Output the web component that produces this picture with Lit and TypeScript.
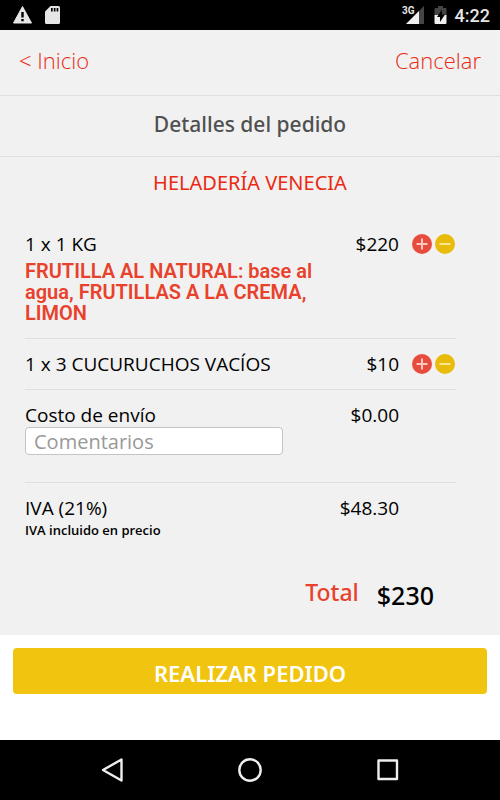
import { LitElement, html, css, nothing } from "lit";
import { customElement, property } from "lit/decorators.js";

interface OrderItem {
  name: string;
  detail?: string;
  price: string;
}

const ITEMS: OrderItem[] = [
  {
    name: "1 x 1 KG",
    detail: "FRUTILLA AL NATURAL: base al agua, FRUTILLAS A LA CREMA, LIMON",
    price: "$220",
  },
  { name: "1 x 3 CUCURUCHOS VACÍOS", price: "$10" },
];

@customElement("status-bar")
export class StatusBar extends LitElement {
  static styles = css`
    :host {
      display: flex;
      align-items: center;
      height: 30px;
      padding: 0 10px 0 12px;
      background: #000;
      color: #e6e6e6;
      font-family: Roboto, sans-serif;
    }
    svg {
      display: block;
    }
    .left {
      display: flex;
      gap: 12px;
      flex: 1;
    }
    .right {
      display: flex;
      align-items: center;
      gap: 8px;
    }
    .signal {
      display: flex;
      padding-right: 2px;
    }
    .network {
      font-size: 10px;
      line-height: 12px;
      font-weight: 700;
      margin-right: -10px;
    }
    .time {
      font-size: 18px;
      line-height: 24px;
      padding-top: 2px;
      font-weight: 500;
    }
  `;

  render() {
    return html`
      <div class="left">
        <svg width="21" height="20" viewBox="0 0 21 20" aria-hidden="true">
          <path d="M10.5 1.5 19.5 18H1.5Z" fill="#e6e6e6" stroke="#e6e6e6" stroke-linejoin="round" />
          <path d="M9.300 7h2.400v5.600H9.300zM9.300 14h2.400v2.200H9.300z" fill="#000" />
        </svg>
        <svg width="16" height="20" viewBox="0 0 16 20" aria-hidden="true">
          <path d="M5.500 1H13.500a1.500 1.500 0 0 1 1.500 1.500v15a1.500 1.500 0 0 1-1.500 1.500H1.500a1.500 1.500 0 0 1-1.500-1.500V6.500Z" fill="#e6e6e6" />
          <path d="M6 3h1.700v3.500H6zM8.800 3h1.700v3.500H8.800zM11.600 3h1.700v3.500h-1.700z" fill="#000" />
        </svg>
      </div>
      <div class="right">
        <div class="signal">
          <span class="network">3G</span>
          <svg width="19" height="20" viewBox="0 0 19 20" aria-hidden="true">
            <path d="M19 1v18H1Z" fill="#444" />
            <path d="M14 6v13H1Z" fill="#f0f0f0" />
          </svg>
        </div>
        <svg width="13" height="20" viewBox="0 0 13 20" aria-hidden="true">
          <path d="M4 1h5v2h2.500a1 1 0 0 1 1 1v6H.5V4a1 1 0 0 1 1-1H4Z" fill="#444" />
          <path d="M.5 10h12v8a1 1 0 0 1-1 1h-10a1 1 0 0 1-1-1Z" fill="#f0f0f0" />
          <path d="M8 4.500 3 12h3v5l5-7.500H8Z" fill="#000" />
        </svg>
        <span class="time">4:22</span>
      </div>
    `;
  }
}

@customElement("order-row")
export class OrderRow extends LitElement {
  @property() name = "";
  @property() detail = "";
  @property() price = "";
  @property({ type: Boolean }) editable = false;

  static styles = css`
    :host {
      display: grid;
      grid-template-columns: minmax(0, 1fr) auto 57px;
      padding: 14px 0;
      border-bottom: 1px solid #dfdfdf;
      font-size: 19px;
      line-height: 22px;
      color: #000;
    }
    :host([last]) {
      border-bottom: 0;
    }
    .detail {
      max-width: 290px;
      margin: 6px 0 0;
      font-family: Roboto, sans-serif;
      font-size: 20px;
      line-height: 21px;
      font-weight: 600;
      color: #e8412c;
    }
    .price {
      text-align: right;
    }
    .actions {
      display: flex;
      justify-content: flex-end;
      gap: 3px;
      padding-right: 1px;
    }
    button {
      width: 20px;
      height: 22px;
      padding: 0;
      border: 0;
      background: none;
    }
    svg {
      display: block;
    }
  `;

  render() {
    return html`
      <div>
        <div>${this.name}</div>
        ${this.detail ? html`<p class="detail">${this.detail}</p>` : nothing}
        <slot></slot>
      </div>
      <div class="price">${this.price}</div>
      <div class="actions">
        ${this.editable
          ? html`
              <button aria-label="Agregar">
                <svg width="20" height="20" viewBox="0 0 20 20" aria-hidden="true">
                  <circle cx="10" cy="10" r="10" fill="#e84c3d" />
                  <path d="M4.500 10h11M10 4.500v11" stroke="#fbc9c2" stroke-width="2" />
                </svg>
              </button>
              <button aria-label="Quitar">
                <svg width="20" height="20" viewBox="0 0 20 20" aria-hidden="true">
                  <circle cx="10" cy="10" r="10" fill="#e9bb0b" />
                  <path d="M4.500 10h11" stroke="#fbe58f" stroke-width="2" />
                </svg>
              </button>
            `
          : nothing}
      </div>
    `;
  }
}

@customElement("nav-bar")
export class NavBar extends LitElement {
  static styles = css`
    :host {
      display: flex;
      justify-content: center;
      gap: 110px;
      align-items: center;
      height: 60px;
      background: #000;
    }
    button {
      padding: 0;
      border: 0;
      background: none;
    }
    svg {
      display: block;
      fill: none;
      stroke: #eee;
      stroke-width: 2.4;
      stroke-linejoin: round;
    }
  `;

  render() {
    return html`
      <button aria-label="Atrás">
        <svg width="28" height="28" viewBox="0 0 28 28"><path d="M23.500 3.500v21L5 14Z" /></svg>
      </button>
      <button aria-label="Inicio">
        <svg width="28" height="28" viewBox="0 0 28 28"><circle cx="14" cy="14" r="10.700" /></svg>
      </button>
      <button aria-label="Recientes">
        <svg width="28" height="28" viewBox="0 0 28 28"><path d="M4.500 4.500h18.500v18.500H4.500Z" /></svg>
      </button>
    `;
  }
}

@customElement("app-root")
export class AppRoot extends LitElement {
  static styles = css`
    :host {
      display: flex;
      flex-direction: column;
      min-height: 100vh;
      background: #fff;
      font-family: "Open Sans", "Noto Sans", sans-serif;
    }
    main {
      background: #f1f1f1;
    }
    .top {
      display: flex;
      justify-content: space-between;
      padding: 15px 19px 20px;
      border-bottom: 1px solid #dfdfdf;
      font-size: 22px;
      line-height: 30px;
    }
    .top a {
      color: #ea2a12;
      font-weight: 300;
      text-decoration: none;
    }
    h1 {
      margin: 0;
      padding: 13px 0 17px;
      border-bottom: 1px solid #dfdfdf;
      text-align: center;
      font-family: "Noto Sans", sans-serif;
      font-size: 21px;
      line-height: 30px;
      font-weight: 500;
      color: #505050;
    }
    h2 {
      margin: 0;
      padding: 11px 0 21px;
      text-align: center;
      font-family: "Noto Sans", sans-serif;
      font-size: 20px;
      line-height: 30px;
      font-weight: 400;
      color: #ea2a12;
    }
    .rows {
      margin: 0 44px 0 25px;
    }
    .comments {
      display: block;
      box-sizing: border-box;
      width: 100%;
      max-width: 258px;
      height: 28px;
      margin: 1px 0 13px;
      padding: 0 8px;
      border: 1px solid #c4c4c4;
      border-radius: 4px;
      background: #fff;
      font: 400 20px/26px "Open Sans", sans-serif;
      color: #333;
    }
    .comments::placeholder {
      color: #999;
      opacity: 1;
    }
    .note {
      display: block;
      font-size: 13px;
      line-height: 22px;
      font-weight: 600;
    }
    .total {
      display: flex;
      justify-content: flex-end;
      gap: 18px;
      margin-top: 21px;
      padding: 0 66px 24px 0;
      font-family: "Noto Sans", sans-serif;
      font-weight: 500;
    }
    .total-label {
      font-size: 23px;
      line-height: 32px;
      color: #e8412c;
    }
    .total-value {
      padding-top: 3px;
      font-size: 25px;
      line-height: 32px;
      color: #000;
    }
    footer {
      flex: 1;
      padding: 13px 13px 46px;
    }
    .submit {
      width: 100%;
      height: 46px;
      padding: 4px 0 0;
      border: 0;
      border-radius: 4px;
      background: #f1c40f;
      color: #fff;
      font: 600 22px/30px "Noto Sans", sans-serif;
    }
  `;

  render() {
    return html`
      <status-bar></status-bar>
      <main>
        <nav class="top">
          <a href="#inicio">&lt; Inicio</a>
          <a href="#cancelar">Cancelar</a>
        </nav>
        <h1>Detalles del pedido</h1>
        <h2>HELADERÍA VENECIA</h2>
        <div class="rows">
          ${ITEMS.map(
            (item) => html`
              <order-row
                editable
                .name=${item.name}
                .detail=${item.detail ?? ""}
                .price=${item.price}
              ></order-row>
            `
          )}
          <order-row name="Costo de envío" price="$0.00">
            <input class="comments" type="text" placeholder="Comentarios" aria-label="Comentarios" />
          </order-row>
          <order-row last name="IVA (21%)" price="$48.30">
            <span class="note">IVA incluido en precio</span>
          </order-row>
        </div>
        <div class="total">
          <span class="total-label">Total</span>
          <span class="total-value">$230</span>
        </div>
      </main>
      <footer>
        <button class="submit">REALIZAR PEDIDO</button>
      </footer>
      <nav-bar></nav-bar>
    `;
  }
}
